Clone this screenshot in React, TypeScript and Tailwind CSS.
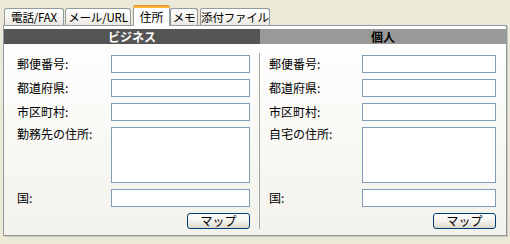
import React from "react";

const font = { fontFamily: '"Noto Sans CJK JP", "Noto Sans", sans-serif' };

function Tab({ label, w, ml, selected }: { label: string; w: string; ml: string; selected?: boolean }) {
  if (selected) {
    return (
      <div className={`${w} ${ml} relative z-10 h-[21px] -mb-[1px] flex flex-col bg-white border-x border-[#919b9c] rounded-t-[3px]`}>
        <div className="h-[3px] -mx-[1px] rounded-t-[3px] bg-gradient-to-b from-[#e68b2c] to-[#ffc73c]" />
        <div className="flex-1 flex items-center justify-center whitespace-nowrap text-[12px] leading-[14px] text-black pb-[1px]">{label}</div>
      </div>
    );
  }
  return (
    <div className={`${w} ${ml} h-[17px] flex items-center justify-center whitespace-nowrap border-x border-t border-[#919b9c] rounded-t-[3px] bg-gradient-to-b from-white via-[#f7f6f2] to-[#e9e8e1] text-[11.5px] leading-[14px] text-black tracking-[-0.2px]`}>
      {label}
    </div>
  );
}

function Field({ label, inputW, tall }: { label: string; inputW: string; tall?: boolean }) {
  return (
    <div className="flex items-start">
      <div className={`flex-1 text-[12px] text-black ${tall ? "leading-[14px]" : "leading-[18px]"}`}>{label}</div>
      <div className={`${inputW} ${tall ? "h-[56px]" : "h-[18px]"} bg-white border border-[#7f9db9]`} />
    </div>
  );
}

function Column({ labels, addr, inputW, padL, padR, divider }: { labels: string[]; addr: string; inputW: string; padL: string; padR: string; divider?: boolean }) {
  return (
    <div className={`${padL} ${padR} pt-[2px] flex flex-col gap-[6px] ${divider ? "border-l border-[#a7a6a0] w-[247px]" : "w-[255px]"}`}>
      {labels.map((l) => (
        <Field key={l} label={l} inputW={inputW} />
      ))}
      <Field label={addr} inputW={inputW} tall />
      <Field label="国:" inputW={inputW} />
      <div className="flex justify-end">
        <div className="w-[63px] h-[16px] flex items-center justify-center rounded-[3px] border border-[#003c74] bg-gradient-to-b from-white via-[#f4f3ee] to-[#dcd8cc] text-[12px] leading-[14px] text-black">
          マップ
        </div>
      </div>
    </div>
  );
}

export default function App() {
  const labels = ["郵便番号:", "都道府県:", "市区町村:"];
  return (
    <div className="w-[510px] h-[244px] bg-[#ece9d8] pl-[3px] pt-[5px] overflow-hidden" style={font}>
      <div className="flex items-end h-[20px] pl-[1px]">
        <Tab label="電話/FAX" w="w-[60px]" ml="ml-0" />
        <Tab label="メール/URL" w="w-[66px]" ml="ml-[1px]" />
        <Tab label="住所" w="w-[37px]" ml="ml-[2px]" selected />
        <Tab label="メモ" w="w-[28px]" ml="ml-0" />
        <Tab label="添付ファイル" w="w-[70px]" ml="ml-[2px]" />
      </div>
      <div className="w-[504px] h-[211px] border border-[#919b9c] shadow-[1px_1px_0_#c9c7ba] bg-gradient-to-b from-white to-[#f3f2ec] pt-[3px]">
        <div className="flex h-[15px] text-[12px] leading-[15px] font-bold">
          <div className="w-[256px] bg-[#555555] text-white text-center">ビジネス</div>
          <div className="w-[246px] bg-[#999999] text-black text-center">個人</div>
        </div>
        <div className="flex mt-[9px]">
          <Column labels={labels} addr="勤務先の住所:" inputW="w-[139px]" padL="pl-[13px]" padR="pr-[9px]" />
          <Column labels={labels} addr="自宅の住所:" inputW="w-[134px]" padL="pl-[9px]" padR="pr-[10px]" divider />
        </div>
      </div>
    </div>
  );
}
